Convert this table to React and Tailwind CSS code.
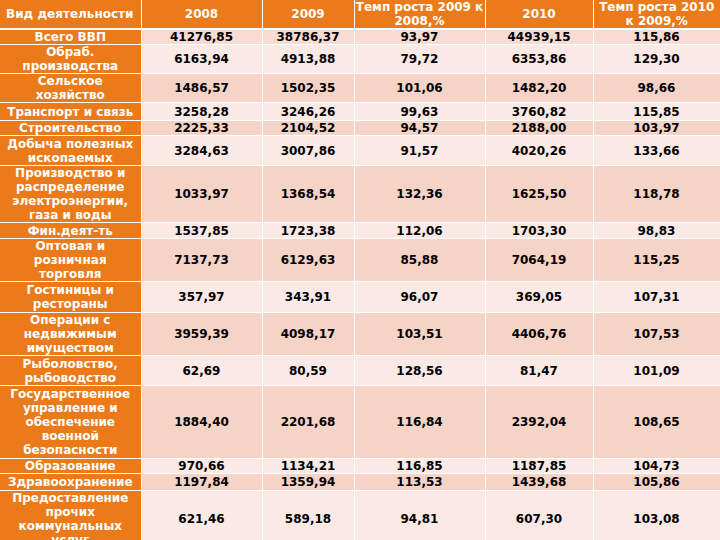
const rows = [
  { h: 'h-[13px]', name: ['Всего ВВП'], v: ['41276,85', '38786,37', '93,97', '44939,15', '115,86'], bg: 'bg-[#f8dbd3]' },
  { h: 'h-[29px]', name: ['Обраб.', 'производства'], v: ['6163,94', '4913,88', '79,72', '6353,86', '129,30'], bg: 'bg-[#fbe9e6]' },
  { h: 'h-[29px]', name: ['Сельское', 'хозяйство'], v: ['1486,57', '1502,35', '101,06', '1482,20', '98,66'], bg: 'bg-[#f6d3c7]' },
  { h: 'h-[18px]', name: ['Транспорт и связь'], v: ['3258,28', '3246,26', '99,63', '3760,82', '115,85'], bg: 'bg-[#fbe9e6]' },
  { h: 'h-[14px]', name: ['Строительство'], v: ['2225,33', '2104,52', '94,57', '2188,00', '103,97'], bg: 'bg-[#f6d3c7]' },
  { h: 'h-[30px]', name: ['Добыча полезных', 'ископаемых'], v: ['3284,63', '3007,86', '91,57', '4020,26', '133,66'], bg: 'bg-[#fbe9e6]' },
  { h: 'h-[56px]', name: ['Производство и', 'распределение', 'электроэнергии,', 'газа и воды'], v: ['1033,97', '1368,54', '132,36', '1625,50', '118,78'], bg: 'bg-[#f6d3c7]' },
  { h: 'h-[16px]', name: ['Фин.деят-ть'], v: ['1537,85', '1723,38', '112,06', '1703,30', '98,83'], bg: 'bg-[#fbe9e6]' },
  { h: 'h-[42px]', name: ['Оптовая и', 'розничная', 'торговля'], v: ['7137,73', '6129,63', '85,88', '7064,19', '115,25'], bg: 'bg-[#f6d3c7]' },
  { h: 'h-[31px]', name: ['Гостиницы и', 'рестораны'], v: ['357,97', '343,91', '96,07', '369,05', '107,31'], bg: 'bg-[#fbe9e6]' },
  { h: 'h-[41px]', name: ['Операции с', 'недвижимым', 'имуществом'], v: ['3959,39', '4098,17', '103,51', '4406,76', '107,53'], bg: 'bg-[#f6d3c7]' },
  { h: 'h-[30px]', name: ['Рыболовство,', 'рыбоводство'], v: ['62,69', '80,59', '128,56', '81,47', '101,09'], bg: 'bg-[#fbe9e6]' },
  { h: 'h-[73px]', name: ['Государственное', 'управление и', 'обеспечение', 'военной', 'безопасности'], v: ['1884,40', '2201,68', '116,84', '2392,04', '108,65'], bg: 'bg-[#f6d3c7]' },
  { h: 'h-[15px]', name: ['Образование'], v: ['970,66', '1134,21', '116,85', '1187,85', '104,73'], bg: 'bg-[#fbe9e6]' },
  { h: 'h-[17px]', name: ['Здравоохранение'], v: ['1197,84', '1359,94', '113,53', '1439,68', '105,86'], bg: 'bg-[#f6d3c7]' },
  { h: 'h-[57px]', name: ['Предоставление', 'прочих', 'коммунальных', 'услуг'], v: ['621,46', '589,18', '94,81', '607,30', '103,08'], bg: 'bg-[#fbe9e6]' },
];

export default function App() {
  return (
    <div className="w-[720px] h-[540px] overflow-hidden bg-white font-['DejaVu_Sans',sans-serif] text-[12px] leading-[14px] font-bold">
      <table className="w-[720px] table-fixed border-collapse">
        <colgroup>
          <col className="w-[141px]" />
          <col className="w-[121px]" />
          <col className="w-[92px]" />
          <col className="w-[131px]" />
          <col className="w-[108px]" />
          <col className="w-[127px]" />
        </colgroup>
        <thead>
          <tr className="h-[28px] bg-[#eb7a1a] text-white">
            <th className="border-b-2 border-r border-white px-1.5 p-0 text-left font-bold whitespace-nowrap">Вид деятельности</th>
            <th className="border-b-2 border-r border-white p-0 text-center font-bold">2008</th>
            <th className="border-b-2 border-r border-white p-0 text-center font-bold">2009</th>
            <th className="border-b-2 border-r border-white p-0 text-center font-bold whitespace-nowrap">Темп роста 2009 к<br />2008,%</th>
            <th className="border-b-2 border-r border-white p-0 text-center font-bold">2010</th>
            <th className="border-b-2 border-white p-0 text-center font-bold whitespace-nowrap">Темп роста 2010<br />к 2009,%</th>
          </tr>
        </thead>
        <tbody>
          {rows.map(r => (
            <tr key={r.name.join(' ')} className={r.h}>
              <td className="border border-l-0 border-white bg-[#eb7a1a] p-0 text-center text-white whitespace-nowrap overflow-hidden">
                {r.name.map((line, i) => (
                  <div key={i}>{line}</div>
                ))}
              </td>
              {r.v.map((val, i) => (
                <td key={i} className={`border border-white p-0 text-center text-black ${r.bg}`}>{val}</td>
              ))}
            </tr>
          ))}
        </tbody>
      </table>
    </div>
  );
}
